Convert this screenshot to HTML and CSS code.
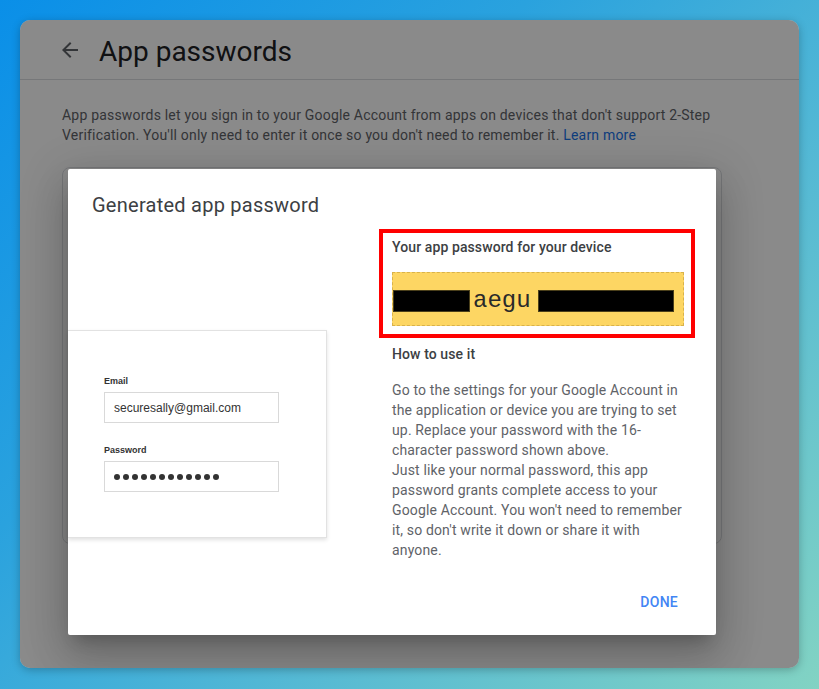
FILE: index.html
```html
<!DOCTYPE html>
<html lang="en">
<head>
<meta charset="utf-8">
<title>App passwords</title>
<link rel="stylesheet" href="styles.css">
</head>
<body>
<div class="window">
  <header class="page-header">
    <svg class="back" viewBox="0 0 24 24" width="24" height="24"><path d="M20 11H7.83l5.59-5.59L12 4l-8 8 8 8 1.41-1.41L7.83 13H20v-2z" fill="currentColor"/></svg>
    <h1 class="page-title">App passwords</h1>
  </header>
  <p class="intro">App passwords let you sign in to your Google Account from apps on devices that don't support 2-Step Verification. You'll only need to enter it once so you don't need to remember it. <a class="link">Learn more</a></p>
  <div class="card"></div>

  <div class="scrim"></div>

  <div class="dialog">
    <h2 class="dialog-title">Generated app password</h2>
    <div class="dialog-body">
      <div class="illus-col">
        <div class="illus">
          <div class="field-label">Email</div>
          <div class="field">securesally@gmail.com</div>
          <div class="field-label second">Password</div>
          <div class="field dots">
            <span></span><span></span><span></span><span></span><span></span><span></span>
            <span></span><span></span><span></span><span></span><span></span><span></span>
          </div>
        </div>
      </div>
      <div class="info-col">
        <div class="highlight">
          <div class="pw-label">Your app password for your device</div>
          <div class="pw-box">
            <span class="redact r1"></span>
            <span class="pw-text">aegu</span>
            <span class="redact r2"></span>
          </div>
        </div>
        <div class="howto">How to use it</div>
        <p class="howto-text">Go to the settings for your Google Account in the application or device you are trying to set up. Replace your password with the 16-character password shown above.<br>Just like your normal password, this app password grants complete access to your Google Account. You won't need to remember it, so don't write it down or share it with anyone.</p>
        <div class="actions"><button class="done">DONE</button></div>
      </div>
    </div>
  </div>
</div>
</body>
</html>
```

FILE: styles.css
```css
* { box-sizing: border-box; }

html, body { height: 100%; }

body {
  margin: 0;
  padding: 20px;
  background: linear-gradient(135deg, #0a8fe8 0%, #2aa2de 35%, #55b9d4 65%, #82d3c3 100%);
  font-family: Roboto, "Noto Sans", sans-serif;
  overflow: hidden;
}

.window {
  position: relative;
  width: 779px;
  height: 648px;
  background: #ffffff;
  border-radius: 10px;
  overflow: hidden;
  box-shadow: 0 2px 8px rgba(0, 0, 0, 0.25);
}

.page-header {
  display: flex;
  align-items: center;
  height: 60px;
  padding: 4px 38px 0;
  border-bottom: 1px solid #dadce0;
}

.back {
  color: #5f6368;
  flex: none;
  margin-top: -3px;
}

.page-title {
  margin: 0 0 0 17px;
  font-size: 28px;
  font-weight: 400;
  color: #202124;
  letter-spacing: 0;
}

.intro {
  margin: 0;
  padding: 25px 0 0 42px;
  width: 702px;
  font-size: 14px;
  line-height: 20px;
  color: #5f6368;
  letter-spacing: 0.2px;
}

.link { color: #1a73e8; }

.card {
  margin: 22px 0 0 42px;
  width: 660px;
  height: 377px;
  border: 1px solid #dadce0;
  border-radius: 8px;
}

.scrim {
  position: absolute;
  inset: 0;
  background: rgba(0, 0, 0, 0.46);
}

.dialog {
  position: absolute;
  left: 48px;
  top: 149px;
  width: 648px;
  height: 466px;
  background: #ffffff;
  border-radius: 2px;
  padding: 22px 24px 15px 0;
  box-shadow: 0 24px 38px 3px rgba(0, 0, 0, 0.14), 0 9px 46px 8px rgba(0, 0, 0, 0.12), 0 11px 15px -7px rgba(0, 0, 0, 0.2);
}

.dialog-title {
  margin: 0 0 10px 24px;
  font-size: 20px;
  line-height: 28px;
  font-weight: 400;
  color: #3c4043;
  letter-spacing: 0.25px;
}

.dialog-body {
  display: grid;
  grid-template-columns: 324px 300px;
}

.illus {
  margin-top: 101px;
  width: 259px;
  height: 208px;
  border: 1px solid #e2e2e2;
  border-left: none;
  box-shadow: 0 2px 4px rgba(0, 0, 0, 0.12);
  padding: 44px 0 0 36px;
  font-family: "Liberation Sans", Arial, sans-serif;
}

.field-label {
  font-size: 9px;
  line-height: 12px;
  font-weight: 700;
  color: #333333;
  margin-bottom: 5px;
}

.field-label.second { margin-top: 21px; }

.field {
  width: 175px;
  height: 31px;
  border: 1px solid #d9d9d9;
  padding: 0 9px;
  display: flex;
  align-items: center;
  font-size: 12px;
  color: #333333;
}

.dots { gap: 3px; }

.dots span {
  width: 6px;
  height: 6px;
  border-radius: 50%;
  background: #333333;
  flex: none;
}

.highlight {
  margin: 0 -3px 0 -13px;
  border: 4px solid #ff0000;
  padding: 4px 7px 8px 9px;
}

.pw-label {
  font-size: 14px;
  line-height: 20px;
  font-weight: 500;
  color: #3c4043;
  letter-spacing: 0.1px;
}

.pw-box {
  margin-top: 15px;
  height: 54px;
  background: #fdd663;
  border: 1px dashed #d9b24a;
  display: flex;
  align-items: center;
  padding-top: 3px;
}

.redact {
  display: block;
  height: 22px;
  background: #000000;
  border: 1px solid #4a3f1a;
}

.r1 { width: 77px; }
.r2 { width: 136px; }

.pw-text {
  font-family: "Liberation Mono", "Courier New", monospace;
  font-size: 24px;
  color: #2a2a2a;
  margin: 0 7px 0 3px;
  line-height: 22px;
}

.howto {
  margin-top: 6px;
  font-size: 14px;
  line-height: 20px;
  font-weight: 500;
  color: #3c4043;
  letter-spacing: 0.1px;
}

.howto-text {
  margin: 16px 0 0;
  font-size: 14px;
  line-height: 20px;
  color: #5f6368;
  letter-spacing: 0.15px;
}

.actions {
  margin-top: 24px;
  display: flex;
  justify-content: flex-end;
}

.done {
  height: 36px;
  padding: 0 14px;
  border: none;
  background: none;
  font-family: Roboto, sans-serif;
  font-size: 14px;
  font-weight: 500;
  color: #4285f4;
  letter-spacing: 0.25px;
}
```
